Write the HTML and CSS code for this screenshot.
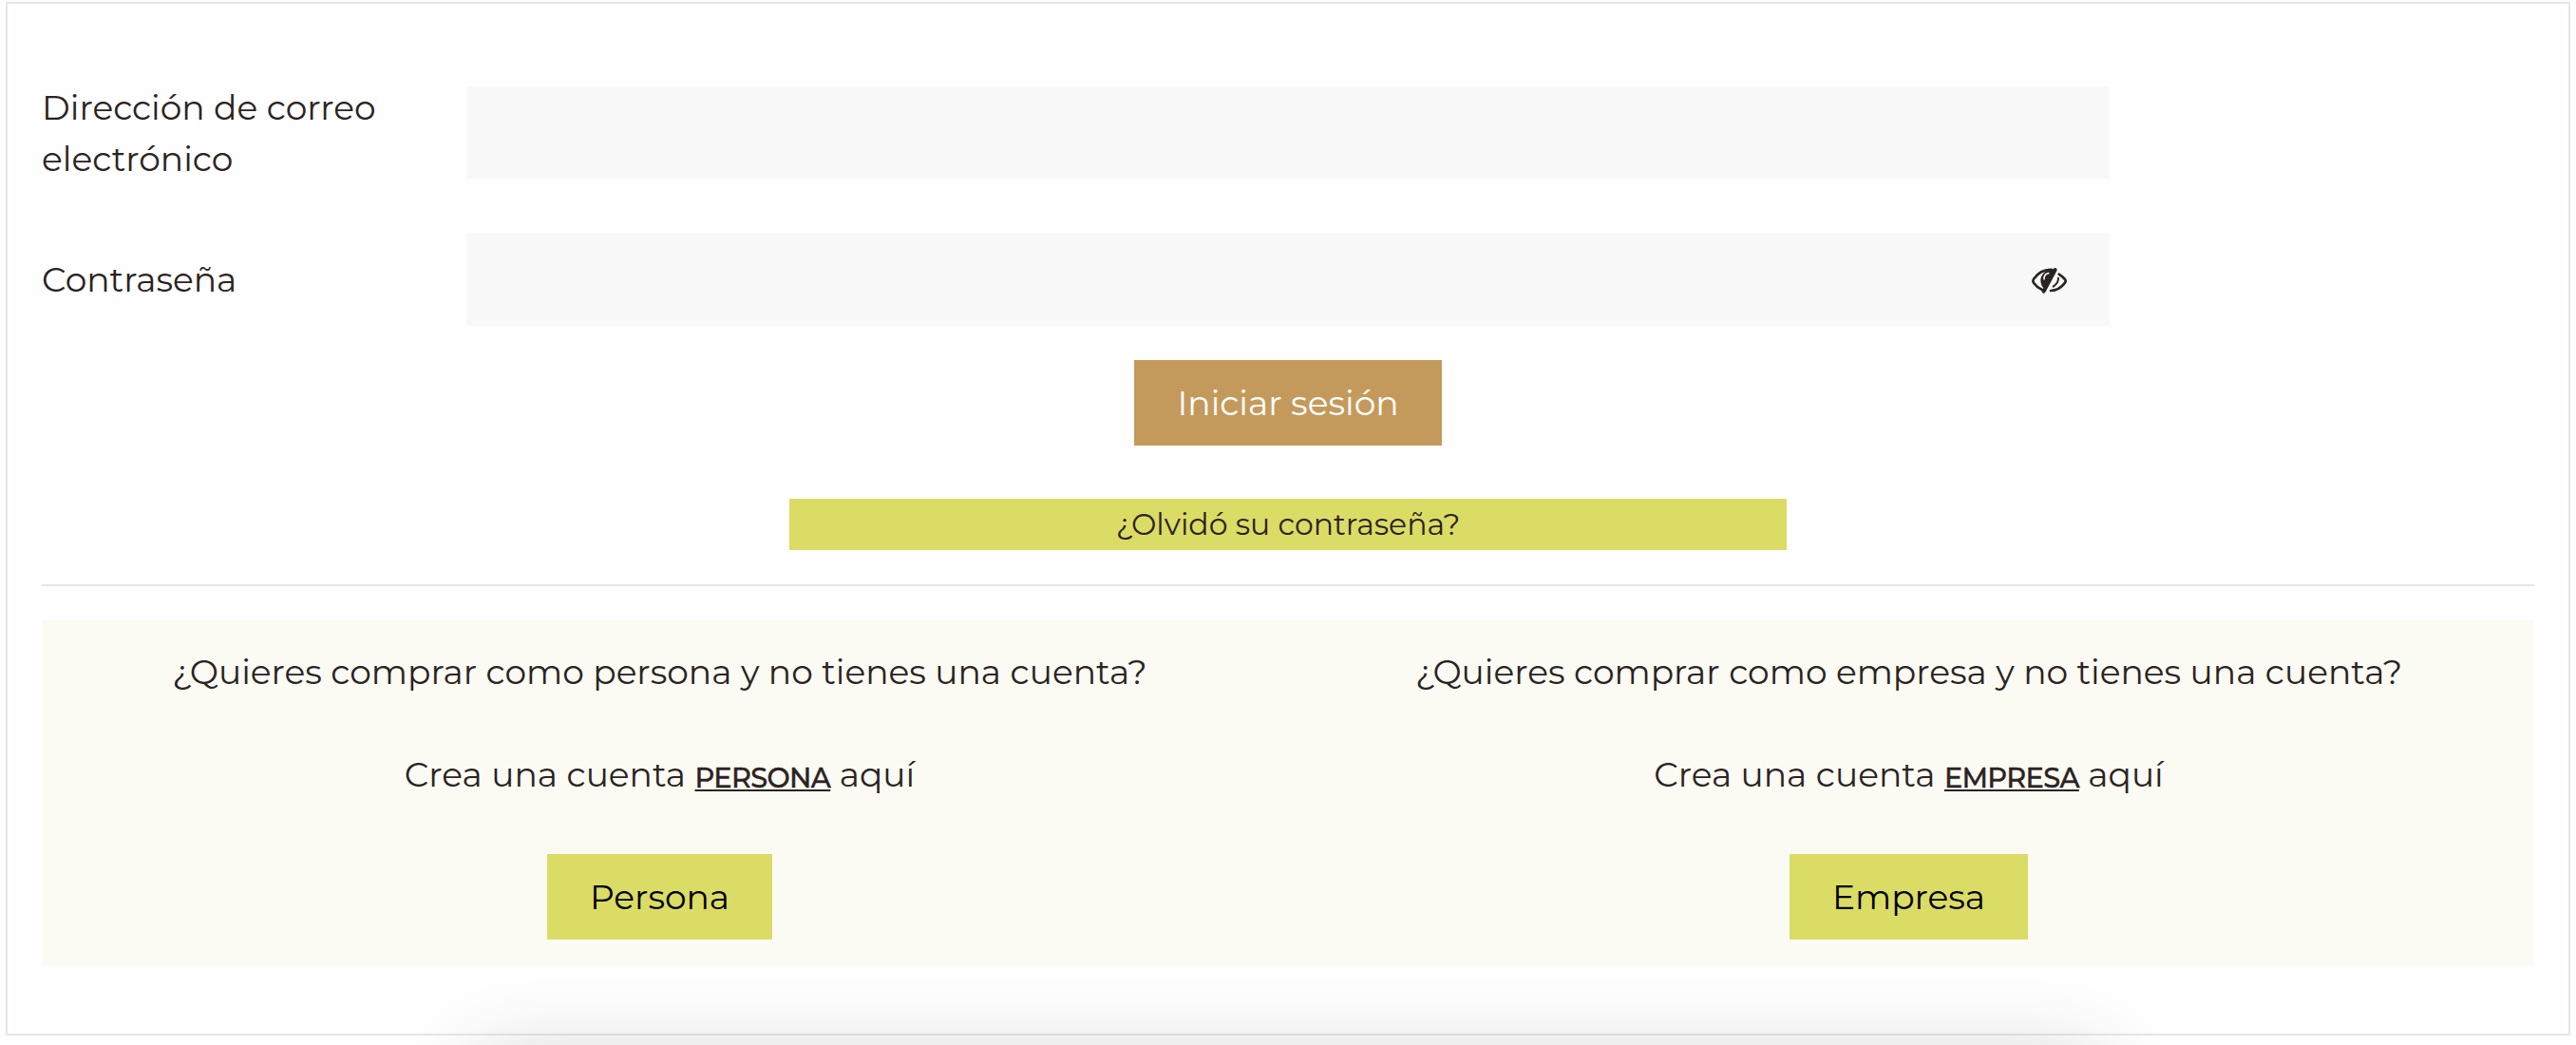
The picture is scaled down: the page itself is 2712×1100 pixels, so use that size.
FILE: index.html
```
<!DOCTYPE html>
<html lang="es">
<head>
<meta charset="utf-8">
<title>Iniciar sesión</title>
<link rel="stylesheet" href="styles.css">
</head>
<body>
<main class="card">
  <form class="login">
    <div class="row">
      <label class="row-label" for="email">Dirección de correo electrónico</label>
      <div class="field"><input id="email" type="email"></div>
    </div>
    <div class="row">
      <label class="row-label" for="password">Contraseña</label>
      <div class="field">
        <input id="password" type="password">
        <svg class="eye" viewBox="0 0 180 132" fill="none" stroke="currentColor" stroke-width="8" stroke-linecap="round" stroke-linejoin="round">
          <path d="M92 27C66 25 46 38 33 56Q29 62 33 68C40 78 50 86 61 91"/>
          <path d="M113 41Q124 48 132 57Q136 62 132 68C120 84 104 93 87 93"/>
          <path d="M111 53Q112 68 95 80" stroke-width="6"/>
          <path d="M96 28C76 26 58 40 57 60Q57 74 66 84Z" fill="currentColor" stroke-width="4"/>
          <path d="M66 56Q66 40 80 38" stroke="#f8f8f8" stroke-width="5"/>
          <path d="M101 27L65 95" stroke-width="12"/>
        </svg>
      </div>
    </div>
    <button class="btn btn-primary" type="button">Iniciar sesión</button>
    <a class="forgot">¿Olvidó su contraseña?</a>
  </form>
  <hr class="divider">
  <section class="signup">
    <div class="option">
      <p>¿Quieres comprar como persona y no tienes una cuenta?</p>
      <p>Crea una cuenta <a class="type">PERSONA</a> aquí</p>
      <button class="btn btn-accent" type="button">Persona</button>
    </div>
    <div class="option">
      <p>¿Quieres comprar como empresa y no tienes una cuenta?</p>
      <p>Crea una cuenta <a class="type">EMPRESA</a> aquí</p>
      <button class="btn btn-accent" type="button">Empresa</button>
    </div>
  </section>
</main>
<div class="sheet"></div>
</body>
</html>
```
FILE: styles.css
```
* { box-sizing: border-box; }

body {
  position: relative;
  height: 1100px;
  margin: 0;
  padding: 2px 6px 0;
  overflow: hidden;
  background: #fefefe;
  color: #2b2322;
  font: 400 36px/54px Montserrat, Lato, sans-serif;
}

.card {
  height: 1088px;
  padding: 82px 36px 0;
  border: 2px solid #e6e6e6;
}

.login {
  display: flex;
  flex-direction: column;
  align-items: center;
}

.row {
  display: grid;
  grid-template-columns: 447px 1730px;
  align-items: center;
  width: 100%;
  height: 108px;
}

.row + .row {
  height: 98px;
  margin: 51px 0 36px;
}

.row-label { padding-right: 60px; }

.field {
  display: flex;
  align-items: center;
  height: 97px;
  margin-top: -1px;
  padding-right: 31px;
  background: #f8f8f8;
}

.row + .row .field {
  height: 98px;
  margin-top: 0;
}

.field input {
  flex: 1;
  min-width: 0;
  height: 100%;
  padding: 0 36px;
  border: 0;
  background: none;
  font: inherit;
}

.eye {
  width: 60px;
  height: 44px;
  margin-top: 5px;
}

.btn {
  padding: 18px 45px;
  border: 0;
  font: inherit;
}

.btn-primary {
  width: 324px;
  background: #c49a5c;
  color: #fff;
}

.btn-accent {
  background: #dbdc66;
  color: #000;
}

.forgot {
  width: 1050px;
  margin-top: 56px;
  background: #dbdc66;
  font-size: 31.5px;
  text-align: center;
}

.divider {
  height: 2px;
  margin: 36px 0;
  border: 0;
  background: #e6e6e6;
}

.signup {
  display: grid;
  grid-template-columns: 1301px 1317px;
  column-gap: 6px;
  padding: 27px 0;
  background: #fbfbf4;
  text-align: center;
}

.option p { margin: 0 0 54px; }
.option p + p { margin-bottom: 57px; }
.option .btn { display: block; margin: 0 auto; }

.type {
  font-size: 28.8px;
  font-weight: 500;
  line-height: 1;
  letter-spacing: -0.65px;
  vertical-align: -1px;
  -webkit-text-stroke: 0.4px currentColor;
  text-decoration: underline;
  text-decoration-thickness: 2px;
  text-underline-offset: 2px;
}

/* Panel docked below the fold; only the top of its shadow is visible */
.sheet {
  position: absolute;
  top: 1112px;
  left: 502px;
  width: 1708px;
  height: 400px;
  box-shadow: 0 0 80px rgba(0, 0, 0, 0.16);
}
```
